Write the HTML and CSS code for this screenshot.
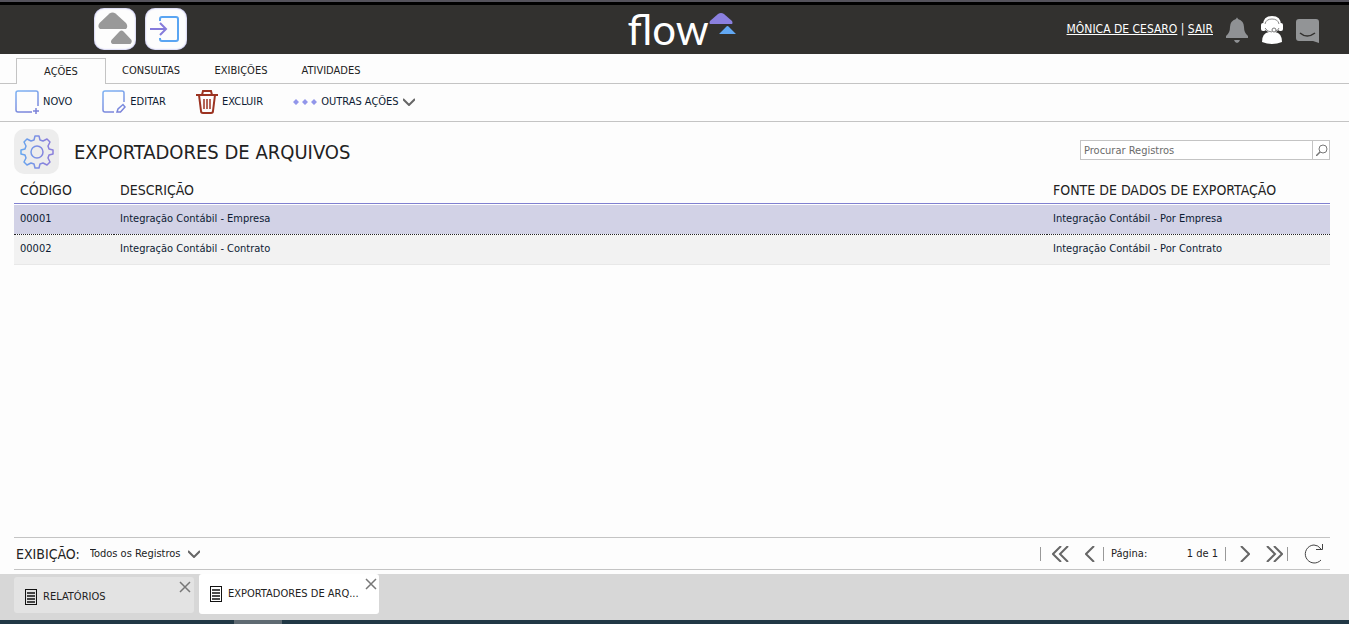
FILE: index.html
```html
<!DOCTYPE html>
<html lang="pt-BR">
<head>
    <meta charset="UTF-8">
    <meta name="viewport" content="width=device-width, initial-scale=1.0">
    <title>Exportadores de Arquivos</title>
    <link rel="stylesheet" href="styles.css">
</head>
<body>
    <!-- gradient shared by the outlined icons -->
    <svg class="defs" width="0" height="0" aria-hidden="true">
        <defs>
            <linearGradient id="blue-purple" gradientUnits="userSpaceOnUse" x1="0" y1="0" x2="10" y2="30">
                <stop offset="0" stop-color="#7db4f4"/>
                <stop offset="1" stop-color="#7a78d4"/>
            </linearGradient>
            <linearGradient id="gear" gradientUnits="userSpaceOnUse" x1="-17" y1="0" x2="10" y2="0">
                <stop offset="0" stop-color="#64a8f0"/>
                <stop offset="1" stop-color="#8a80dc"/>
            </linearGradient>
        </defs>
    </svg>

    <header class="topbar">
        <div class="apps">
            <button class="app-button" aria-label="Início">
                <svg width="42" height="42" viewBox="0 0 42 42">
                    <path d="M15.500 5.500Q18.500 3.500 21.500 5.500L32 15Q34.500 18.500 32 21H6Q3 18.500 5.500 15Z" fill="#999"/>
                    <path d="M25.500 23.500Q27.500 21.500 29.500 23.500L37.500 32Q38.500 34.500 36.500 36H18.500Q16 34.500 17.500 32Z" fill="#999"/>
                </svg>
            </button>
            <button class="app-button" aria-label="Entrar">
                <svg width="42" height="42" viewBox="0 0 42 42" fill="none" stroke-width="2">
                    <path d="M15 13V11Q15 9 17 9H31Q33 9 33 11V31Q33 33 31 33H17Q15 33 15 31V30" stroke="#5aa5f2"/>
                    <path d="M5 21H21M15 15L21 21L15 27" stroke="#857bdb"/>
                </svg>
            </button>
        </div>
        <a class="logo" href="#">
            <span>flow</span>
            <svg width="28" height="22" viewBox="0 0 28 22">
                <path d="M9 1Q12 -1 15 1L23 8Q24 10 23 11H1Q0 10 1 8Z" fill="#8b80df"/>
                <path d="M17 14Q18.500 12 20 14L27 21H10Z" fill="#62a8f3"/>
            </svg>
        </a>
        <div class="user">
            <span class="user-links"><a href="#">MÔNICA DE CESARO</a> | <a href="#">SAIR</a></span>
            <button class="plain" aria-label="Notificações">
                <svg width="22" height="26" viewBox="0 0 22 26" fill="#8f9194">
                    <path d="M10 2Q11 -1 12 2Q18 4 18 10Q18 16 22 19V21H0V19Q4 16 4 10Q4 4 10 2Z"/>
                    <path d="M8 23H14Q13 26 11 26Q9 26 8 23Z"/>
                </svg>
            </button>
            <button class="plain" aria-label="Suporte">
                <svg width="22" height="28" viewBox="0 0 22 28">
                    <path d="M1 26Q1 17 8 16H14Q21 17 21 26Q16 28 11 28Q6 28 1 26Z" fill="#fff"/>
                    <path d="M3 9Q3 1 11 1Q19 1 19 9" fill="none" stroke="#fff" stroke-width="2"/>
                    <rect x="0" y="7" width="5" height="8" rx="2" fill="#fff"/>
                    <rect x="17" y="7" width="5" height="8" rx="2" fill="#fff"/>
                    <circle cx="11" cy="9" r="8" fill="#fff"/>
                    <path d="M4 8Q5 3 11 3Q17 3 18 8M4 12Q6 16 11 16M18 12Q17 15 14 15" fill="none" stroke="#888"/>
                    <circle cx="13" cy="14" r="2" fill="#fff" stroke="#777"/>
                </svg>
            </button>
            <button class="plain" aria-label="Chat">
                <svg width="24" height="25" viewBox="0 0 24 25">
                    <path d="M3 1H20Q23 1 23 4V25L17 23H3Q0 23 0 20V4Q0 1 3 1Z" fill="#929496"/>
                    <path d="M4 15Q11 21 19 15" fill="none" stroke="#32312f" stroke-width="1.500"/>
                </svg>
            </button>
        </div>
    </header>

    <nav class="tabs">
        <a class="tab active" href="#">AÇÕES</a>
        <a class="tab" href="#">CONSULTAS</a>
        <a class="tab" href="#">EXIBIÇÕES</a>
        <a class="tab" href="#">ATIVIDADES</a>
    </nav>

    <div class="toolbar">
        <button class="tool">
            <svg width="24" height="24" viewBox="0 0 24 24" fill="none" stroke="url(#blue-purple)" stroke-width="1.500">
                <path d="M17 22H3Q1 22 1 20V3Q1 1 3 1H21Q23 1 23 3V16M21 18V24M18 21H24"/>
            </svg>
            NOVO
        </button>
        <button class="tool">
            <svg width="24" height="24" viewBox="0 0 24 24" fill="none" stroke="url(#blue-purple)" stroke-width="1.500">
                <path d="M12 22H3Q1 22 1 20V3Q1 1 3 1H20Q22 1 22 3V12M15 22L16 19L21 14.500L23 17L18.500 22Z"/>
            </svg>
            EDITAR
        </button>
        <button class="tool">
            <svg width="22" height="24" viewBox="0 0 22 24" fill="none" stroke="#9c3321" stroke-width="2">
                <path d="M0 5H22M6 5L7 1H15L16 5M3 5L5 21Q5 23 7 23H15Q17 23 17 21L19 5"/>
                <path d="M8 9V19M11 9V19M14 9V19" stroke-width="1.500"/>
            </svg>
            EXCLUIR
        </button>
        <button class="tool">
            <svg width="24" height="6" viewBox="0 0 24 6" fill="#9296ea">
                <path d="M3 0L6 3L3 6L0 3ZM12 0L15 3L12 6L9 3ZM21 0L24 3L21 6L18 3Z"/>
            </svg>
            OUTRAS AÇÕES
            <svg width="12" height="8" viewBox="0 0 12 8" fill="none" stroke="#666" stroke-width="2">
                <path d="M0 1L6 7L12 1"/>
            </svg>
        </button>
    </div>

    <main class="content">
        <div class="heading">
            <span class="heading-icon">
                <svg width="34" height="34" viewBox="-17 -17 34 34" fill="none" stroke="url(#gear)" stroke-width="1.500">
                    <path d="M-3 -12L-2 -16H2L3 -12L6 -11L10 -13L13 -10L11 -6L12 -3L16 -2V2L12 3L11 6L13 10L10 13L6 11L3 12L2 16H-2L-3 12L-6 11L-10 13L-13 10L-11 6L-12 3L-16 2V-2L-12 -3L-11 -6L-13 -10L-10 -13L-6 -11Z" stroke-linejoin="round"/>
                    <circle r="6"/>
                </svg>
            </span>
            <h1>EXPORTADORES DE ARQUIVOS</h1>
            <form class="search">
                <input type="search" placeholder="Procurar Registros" aria-label="Procurar Registros">
                <button type="button" aria-label="Procurar">
                    <svg width="12" height="12" viewBox="0 0 12 12" fill="none" stroke="#777">
                        <circle cx="7" cy="5" r="4"/>
                        <path d="M4 8L0 12" stroke-width="1.500"/>
                    </svg>
                </button>
            </form>
        </div>

        <table class="records">
            <thead>
                <tr>
                    <th class="col-code">CÓDIGO</th>
                    <th>DESCRIÇÃO</th>
                    <th class="col-source">FONTE DE DADOS DE EXPORTAÇÃO</th>
                </tr>
            </thead>
            <tbody>
                <tr class="selected">
                    <td>00001</td>
                    <td>Integração Contábil - Empresa</td>
                    <td>Integração Contábil - Por Empresa</td>
                </tr>
                <tr>
                    <td>00002</td>
                    <td>Integração Contábil - Contrato</td>
                    <td>Integração Contábil - Por Contrato</td>
                </tr>
            </tbody>
        </table>

        <div class="footer">
            <label class="view-label" for="view">EXIBIÇÃO:</label>
            <select id="view">
                <option>Todos os Registros</option>
            </select>
            <svg class="view-arrow" width="12" height="8" viewBox="0 0 12 8" fill="none" stroke="#666" stroke-width="2">
                <path d="M0 1L6 7L12 1"/>
            </svg>
            <div class="pager">
                <div class="pager-group">
                    <button class="plain" aria-label="Primeira página">
                        <svg width="17" height="16" viewBox="0 0 17 16"><path d="M9 0L1 8L9 16M16 0L8 8L16 16"/></svg>
                    </button>
                    <button class="plain" aria-label="Página anterior">
                        <svg width="10" height="16" viewBox="0 0 10 16"><path d="M9 0L1 8L9 16"/></svg>
                    </button>
                </div>
                <div class="pager-group page">
                    <label for="page">Página:</label>
                    <span><input id="page" type="text" value="1"> de 1</span>
                </div>
                <div class="pager-group next">
                    <button class="plain" aria-label="Próxima página">
                        <svg width="10" height="16" viewBox="0 0 10 16"><path d="M1 0L9 8L1 16"/></svg>
                    </button>
                    <button class="plain" aria-label="Última página">
                        <svg width="17" height="16" viewBox="0 0 17 16"><path d="M1 0L9 8L1 16M8 0L16 8L8 16"/></svg>
                    </button>
                </div>
                <div class="pager-group refresh">
                    <button class="plain" aria-label="Atualizar">
                        <svg width="20" height="20" viewBox="0 0 20 20"><path d="M17 5Q14 1 10 1A9 9 0 1 0 17 16M18.500 0V5.500H12"/></svg>
                    </button>
                </div>
            </div>
        </div>
    </main>

    <div class="windows">
        <div class="window">
            <svg width="12" height="16" viewBox="0 0 12 16" fill="none" stroke="#111">
                <rect x=".5" y=".5" width="11" height="15"/>
                <path d="M2 4H10M2 7H10M2 10H10M2 13H10" stroke-width="1.500"/>
            </svg>
            <a href="#">RELATÓRIOS</a>
            <button class="close" aria-label="Fechar Relatórios">
                <svg width="12" height="12" viewBox="0 0 12 12"><path d="M1 1L11 11M11 1L1 11"/></svg>
            </button>
        </div>
        <div class="window current">
            <svg width="12" height="16" viewBox="0 0 12 16" fill="none" stroke="#111">
                <rect x=".5" y=".5" width="11" height="15"/>
                <path d="M2 4H10M2 7H10M2 10H10M2 13H10" stroke-width="1.500"/>
            </svg>
            <a href="#">EXPORTADORES DE ARQ...</a>
            <button class="close" aria-label="Fechar Exportadores de Arquivos">
                <svg width="12" height="12" viewBox="0 0 12 12"><path d="M1 1L11 11M11 1L1 11"/></svg>
            </button>
        </div>
    </div>
    <div class="bottom-strip"><span></span></div>
</body>
</html>
```
FILE: styles.css
```css
* {
    box-sizing: border-box;
}
body {
    display: flex;
    flex-direction: column;
    min-height: 100vh;
    margin: 0;
    font-family: Tahoma, "DejaVu Sans Condensed", "Noto Sans", sans-serif;
    font-size: 11px;
    line-height: 16px;
    color: #222;
    background-color: #fdfdfd;
}
svg {
    display: block;
    flex: none;
}
a {
    color: inherit;
    text-decoration: none;
}
button, input, select {
    font: inherit;
    color: inherit;
}
button {
    padding: 0;
    border: none;
    background: none;
    cursor: pointer;
}
.defs {
    position: absolute;
}

/* top bar */
.topbar {
    display: grid;
    grid-template-columns: 1fr auto 1fr;
    align-items: center;
    height: 54px;
    padding: 4px 29px 0 94px;
    background: linear-gradient(#55535c 2px, #000 2px, #000 5px, #32312f 5px);
    color: #fff;
}
.apps {
    display: flex;
    gap: 9px;
}
.app-button {
    border-radius: 10px;
    background-color: #fdfdfd;
    box-shadow: inset 0 0 2px #8a8ae0;
}
.logo {
    display: flex;
    margin-left: -50px;
    font-family: Lato, sans-serif;
    font-size: 42px;
    line-height: 32px;
}
.user {
    display: flex;
    justify-content: flex-end;
    align-items: center;
    gap: 13px;
    padding-top: 2px;
}
.user-links {
    padding-bottom: 3px;
    font-size: 12px;
    white-space: nowrap;
}
.user-links a {
    text-decoration: underline;
}

/* tabs and actions */
.tabs {
    display: flex;
    align-items: flex-end;
    height: 30px;
    padding-left: 16px;
    border-bottom: 1px solid #c4c4c4;
}
.tab {
    width: 90px;
    height: 25px;
    padding-top: 5px;
    text-align: center;
}
.tab.active {
    height: 26px;
    margin-bottom: -1px;
    border: 1px solid #c4c4c4;
    border-bottom: none;
    background-color: #fdfdfd;
}
.toolbar {
    display: flex;
    align-items: center;
    gap: 30px;
    height: 38px;
    padding: 0 15px 1px;
    border-bottom: 1px solid #c4c4c4;
}
.tool {
    display: flex;
    align-items: center;
    gap: 4px;
    color: #0d1b33;
}

/* content */
.content {
    display: flex;
    flex: 1;
    flex-direction: column;
    padding: 7px 19px 4px 14px;
}
.heading {
    display: flex;
    align-items: center;
    gap: 15px;
}
.heading-icon {
    display: flex;
    align-items: center;
    justify-content: center;
    width: 45px;
    height: 45px;
    border-radius: 10px;
    background-color: #ededed;
}
h1 {
    margin: 0;
    font-size: 20px;
    font-weight: normal;
    line-height: 24px;
}
.search {
    display: flex;
    width: 250px;
    height: 20px;
    margin: 0 0 3px auto;
    border: 1px solid #c4c4c4;
    background-color: #fff;
}
.search input {
    flex: 1;
    min-width: 0;
    padding: 1px 3px 0;
    border: none;
    background: none;
}
.search input::placeholder {
    color: #6b6b6b;
}
.search button {
    width: 17px;
    padding-left: 3px;
    border-left: 1px solid #c4c4c4;
}
.records {
    width: 100%;
    border-collapse: separate;
    border-spacing: 0;
    table-layout: fixed;
}
.records th {
    height: 30px;
    padding: 2px 6px 0;
    border-bottom: 1px solid #8080d0;
    font-size: 14px;
    font-weight: normal;
    text-align: left;
}
.records td {
    height: 30px;
    padding: 0 6px 1px;
    border-bottom: 1px solid #e8e8e8;
    background-color: #f2f2f2;
    color: #0d1b33;
}
.records .selected td {
    height: 31px;
    border-top: 1px solid #fff;
    border-bottom: 1px dotted #222;
    background-color: #d2d2e6;
    background-clip: padding-box;
}
.records .col-code {
    width: 100px;
}
.records .col-source {
    width: 283px;
}

/* footer with the view and the pager */
.footer {
    display: flex;
    align-items: center;
    height: 33px;
    margin-top: auto;
    padding: 0 6px 0 2px;
    border-top: 1px solid #c4c4c4;
    border-bottom: 1px solid #c4c4c4;
}
.view-label {
    margin-right: 10px;
    font-size: 14px;
}
#view {
    padding: 0;
    border: none;
    background: none;
    appearance: none;
}
.view-arrow {
    margin-left: 7px;
}
.pager {
    display: flex;
    align-items: center;
    margin-left: auto;
}
.pager svg {
    fill: none;
    stroke: #666;
    stroke-width: 2;
}
.pager-group {
    display: flex;
    align-items: center;
    gap: 16px;
    height: 14px;
    padding: 0 8px 0 11px;
    border-left: 1px solid #999;
}
.page {
    justify-content: space-between;
    width: 122px;
    padding: 0 7px;
}
.page input {
    width: 20px;
    padding: 0;
    border: none;
    background: none;
    text-align: right;
}
.next {
    padding: 0 4px 0 14px;
}
.refresh {
    padding: 0 0 0 16px;
}
.pager .refresh svg {
    stroke: #444;
    stroke-width: 1;
}

/* open windows */
.windows {
    display: flex;
    gap: 5px;
    height: 46px;
    padding-left: 14px;
    background-color: #d7d7d7;
}
.window {
    display: flex;
    align-items: center;
    gap: 6px;
    width: 180px;
    height: 36px;
    margin-top: 3px;
    padding: 4px 3px 0 11px;
    border-radius: 3px;
    background-color: #e3e3e3;
}
.window.current {
    height: 40px;
    margin-top: 0;
    padding-top: 0;
    background-color: #fff;
}
.window a {
    white-space: nowrap;
}
.close {
    align-self: flex-start;
    margin-left: auto;
}
.window.current .close {
    padding-top: 4px;
}
.close svg {
    stroke: #777;
    stroke-width: 1.5;
}
.bottom-strip {
    height: 4px;
    padding-left: 234px;
    background-color: #213845;
}
.bottom-strip span {
    display: block;
    width: 48px;
    height: 4px;
    background-color: #5f6a72;
}
```
